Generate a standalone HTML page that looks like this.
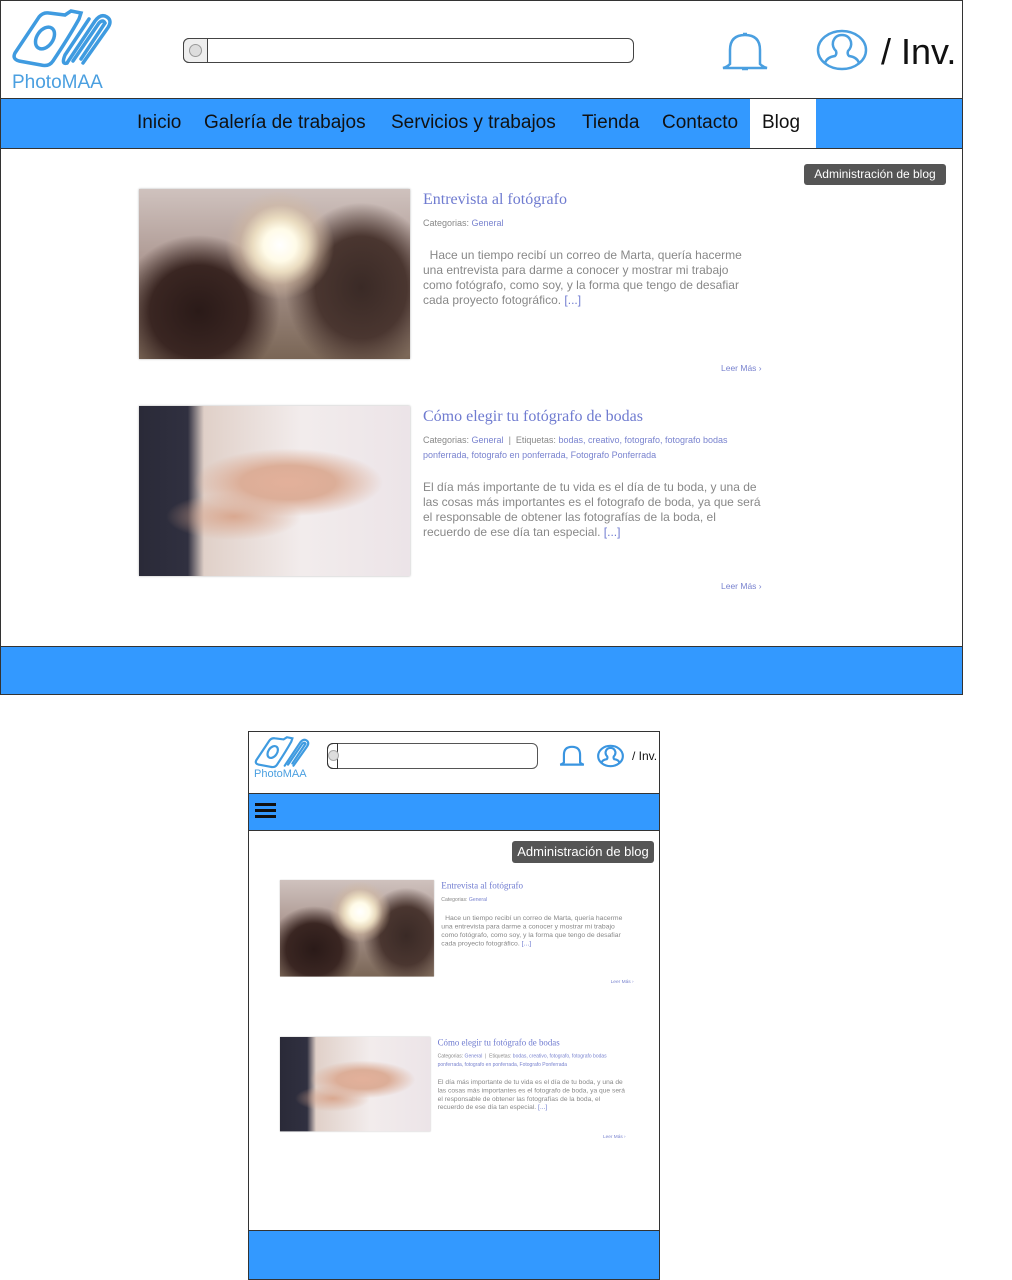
<!DOCTYPE html>
<html><head><meta charset="utf-8"><style>
*{margin:0;padding:0;box-sizing:border-box}
body{width:1012px;height:1280px;background:#fff;position:relative;overflow:hidden;font-family:"Liberation Sans",sans-serif}
.a{position:absolute}
.frame{position:absolute;border:1px solid #333;background:#fff;overflow:hidden}
.blue{position:absolute;background:#3399ff;border-top:1px solid #333;border-bottom:1px solid #333}
.nav span{position:absolute;font-size:19px;color:#111}
.btn{position:absolute;background:#555;color:#fff;border-radius:3px;text-align:center}
.post{position:absolute;width:640px;height:200px;transform-origin:0 0}
.img{position:absolute;left:0;top:0;width:271px;height:170px;box-shadow:0 0 2px #aaa}
.p1{background:radial-gradient(circle at 52% 33%,#fff 0,#fffbe8 9%,#eadcc0 15%,rgba(210,185,160,.5) 22%,transparent 30%),radial-gradient(ellipse 30% 45% at 22% 72%,#2a1a18 0,#3a2622 60%,transparent 100%),radial-gradient(ellipse 28% 50% at 82% 58%,#3a2a26 0,#4a3630 60%,transparent 100%),linear-gradient(180deg,#cfc2be 0,#b09c96 40%,#7a6656 100%)}
.p2{background:radial-gradient(ellipse 35% 20% at 55% 45%,#e3b09a 0,#dcae98 50%,transparent 100%),radial-gradient(ellipse 25% 14% at 35% 65%,#d9a890 0,transparent 100%),linear-gradient(90deg,#2a2a38 0,#303040 18%,#e0d0c8 24%,#f2ecec 60%,#ece4e8 100%)}
.t{position:absolute;left:284px;top:2px;font-family:"Liberation Serif",serif;font-size:16px;color:#6f7bd0;white-space:nowrap}
.m{position:absolute;left:284px;font-size:9px;color:#888;white-space:nowrap;line-height:15px}
.m b{font-weight:normal;color:#7983cf}
.x{position:absolute;left:284px;font-size:12px;color:#888;line-height:15px;white-space:nowrap}
.x b{font-weight:normal;color:#6f7bd0}
.lm{position:absolute;left:582px;font-size:8.5px;color:#7983cf;white-space:nowrap}
</style></head><body>

<!-- DESKTOP -->
<div class="frame" style="left:0;top:0;width:963px;height:695px">
  <svg class="a" style="left:8px;top:6px" width="106" height="62" viewBox="0 0 106 62">
    <g fill="none" stroke="#3f9be0" stroke-width="3.5" stroke-linecap="round">
      <path d="M6 46 L30 10 Q34 5 40 6 L56 8 L62 4 L72 6 L70 12 Q60 30 44 54 Q40 60 32 58 L10 54 Q3 52 6 46Z"/>
      <ellipse cx="36" cy="31" rx="8" ry="12" transform="rotate(35 36 31)"/>
      <path d="M58 56 L86 14 Q92 6 98 10 Q104 14 98 22 L74 56"/>
      <path d="M64 54 L90 16 Q94 12 96 16 L72 52"/>
      <path d="M58 56 Q52 58 56 48 L80 12"/>
    </g>
  </svg>
  <div class="a" style="left:11px;top:71px;font-size:19px;color:#4a9fe0">PhotoMAA</div>
  <div class="a" style="left:182px;top:37px;width:451px;height:25px;border:1px solid #444;border-radius:6px;background:#fff"></div>
  <div class="a" style="left:182px;top:37px;width:25px;height:25px;border:1px solid #444;border-radius:6px 0 0 6px;background:#eee"></div>
  <div class="a" style="left:188px;top:43px;width:13px;height:13px;border:1px solid #999;border-radius:50%;background:#ddd"></div>
  <svg class="a" style="left:718px;top:30px" width="52" height="42" viewBox="0 0 52 42">
    <g fill="none" stroke="#4a9fe0" stroke-width="2.5"><path d="M11 33 L11 19 Q11 4 26 4 Q41 4 41 19 L41 33 Q44 36 48 37 L4 37 Q8 36 11 33 Z"/><path d="M24 3 L28 3 M23 38 L29 38"/></g>
  </svg>
  <svg class="a" style="left:814px;top:27px" width="54" height="44" viewBox="0 0 54 44">
    <g fill="none" stroke="#4a9fe0" stroke-width="2.5"><ellipse cx="27" cy="22" rx="24" ry="19"/><path d="M10 35 Q12 29 20 28 Q22 26 21 23 Q17 19 18 14 Q20 7 27 7 Q34 7 36 14 Q37 19 33 23 Q32 26 34 28 Q42 29 44 35"/></g>
  </svg>
  <div class="a" style="left:880px;top:30px;font-size:36px;color:#111">/ Inv.</div>
  <div class="blue" style="left:0;top:97px;width:963px;height:51px"></div>
  <div class="a" style="left:749px;top:98px;width:66px;height:49px;background:#fff"></div>
  <div class="nav">
    <span style="left:136px;top:111px">Inicio</span>
    <span style="left:203px;top:111px">Galería de trabajos</span>
    <span style="left:390px;top:111px">Servicios y trabajos</span>
    <span style="left:581px;top:111px">Tienda</span>
    <span style="left:661px;top:111px">Contacto</span>
    <span style="left:761px;top:111px">Blog</span>
  </div>
  <div class="btn" style="left:803px;top:163px;width:142px;height:21px;font-size:12px;line-height:21px">Administración de blog</div>

  <div class="post" style="left:138px;top:188px">
    <div class="img p1"></div>
    <div class="t">Entrevista al fotógrafo</div>
    <div class="m" style="top:27px">Categorias: <b>General</b></div>
    <div class="x" style="top:59px">&nbsp; Hace un tiempo recibí un correo de Marta, quería hacerme<br>una entrevista para darme a conocer y mostrar mi trabajo<br>como fotógrafo, como soy, y la forma que tengo de desafiar<br>cada proyecto fotográfico. <b>[...]</b></div>
    <div class="lm" style="top:174px">Leer Más ›</div>
  </div>

  <div class="post" style="left:138px;top:405px">
    <div class="img p2"></div>
    <div class="t">Cómo elegir tu fotógrafo de bodas</div>
    <div class="m" style="top:27px">Categorias: <b>General</b> &nbsp;| &nbsp;Etiquetas: <b>bodas, creativo, fotografo, fotografo bodas</b><br><b>ponferrada, fotografo en ponferrada, Fotografo Ponferrada</b></div>
    <div class="x" style="top:74px">El día más importante de tu vida es el día de tu boda, y una de<br>las cosas más importantes es el fotografo de boda, ya que será<br>el responsable de obtener las fotografías de la boda, el<br>recuerdo de ese día tan especial. <b>[...]</b></div>
    <div class="lm" style="top:175px">Leer Más ›</div>
  </div>
  <div class="blue" style="left:0;top:645px;width:963px;height:50px;border-bottom:none"></div>
</div>

<!-- MOBILE -->
<div class="frame" style="left:248px;top:731px;width:412px;height:549px">
  <svg class="a" style="left:4px;top:3px" width="58" height="34" viewBox="0 0 106 62">
    <g fill="none" stroke="#3f9be0" stroke-width="4" stroke-linecap="round">
      <path d="M6 46 L30 10 Q34 5 40 6 L56 8 L62 4 L72 6 L70 12 Q60 30 44 54 Q40 60 32 58 L10 54 Q3 52 6 46Z"/>
      <ellipse cx="36" cy="31" rx="8" ry="12" transform="rotate(35 36 31)"/>
      <path d="M58 56 L86 14 Q92 6 98 10 Q104 14 98 22 L74 56"/>
      <path d="M64 54 L90 16 Q94 12 96 16 L72 52"/>
    </g>
  </svg>
  <div class="a" style="left:5px;top:36px;font-size:11px;color:#4a9fe0">PhotoMAA</div>
  <div class="a" style="left:78px;top:11px;width:211px;height:26px;border:1px solid #555;border-radius:6px"></div>
  <div class="a" style="left:78px;top:11px;width:11px;height:26px;border:1px solid #333;border-radius:6px 0 0 6px"></div>
  <div class="a" style="left:79px;top:18px;width:11px;height:11px;border-radius:50%;background:#ddd;border:1px solid #aaa"></div>
  <svg class="a" style="left:309px;top:11px" width="28" height="26" viewBox="0 0 52 42">
    <g fill="none" stroke="#3a95e0" stroke-width="4"><path d="M11 33 L11 19 Q11 4 26 4 Q41 4 41 19 L41 33 Q44 36 48 37 L4 37 Q8 36 11 33 Z"/></g>
  </svg>
  <svg class="a" style="left:347px;top:10px" width="29" height="28" viewBox="0 0 54 44">
    <g fill="none" stroke="#3a95e0" stroke-width="4"><ellipse cx="27" cy="22" rx="23" ry="19"/><path d="M10 35 Q12 29 20 28 Q22 26 21 23 Q17 19 18 14 Q20 7 27 7 Q34 7 36 14 Q37 19 33 23 Q32 26 34 28 Q42 29 44 35"/></g>
  </svg>
  <div class="a" style="left:383px;top:17px;font-size:12px;color:#111">/ Inv.</div>
  <div class="blue" style="left:0;top:61px;width:412px;height:38px"></div>
  <div class="a" style="left:6px;top:71px;width:21px;height:3px;background:#111;box-shadow:0 6px 0 #111,0 12px 0 #111"></div>
  <div class="btn" style="left:263px;top:109px;width:142px;height:22px;font-size:13px;line-height:22px">Administración de blog</div>

  <div class="post" style="left:31px;top:148px;transform:scale(0.568)">
    <div class="img p1"></div>
    <div class="t">Entrevista al fotógrafo</div>
    <div class="m" style="top:27px">Categorias: <b>General</b></div>
    <div class="x" style="top:59px">&nbsp; Hace un tiempo recibí un correo de Marta, quería hacerme<br>una entrevista para darme a conocer y mostrar mi trabajo<br>como fotógrafo, como soy, y la forma que tengo de desafiar<br>cada proyecto fotográfico. <b>[...]</b></div>
    <div class="lm" style="top:173px">Leer Más ›</div>
  </div>
  <div class="post" style="left:31px;top:305px;transform:scale(0.555)">
    <div class="img p2"></div>
    <div class="t">Cómo elegir tu fotógrafo de bodas</div>
    <div class="m" style="top:27px">Categorias: <b>General</b> &nbsp;| &nbsp;Etiquetas: <b>bodas, creativo, fotografo, fotografo bodas</b><br><b>ponferrada, fotografo en ponferrada, Fotografo Ponferrada</b></div>
    <div class="x" style="top:74px">El día más importante de tu vida es el día de tu boda, y una de<br>las cosas más importantes es el fotografo de boda, ya que será<br>el responsable de obtener las fotografías de la boda, el<br>recuerdo de ese día tan especial. <b>[...]</b></div>
    <div class="lm" style="top:174px">Leer Más ›</div>
  </div>
  <div class="blue" style="left:0;top:498px;width:412px;height:52px;border-bottom:none"></div>
</div>
</body></html>
